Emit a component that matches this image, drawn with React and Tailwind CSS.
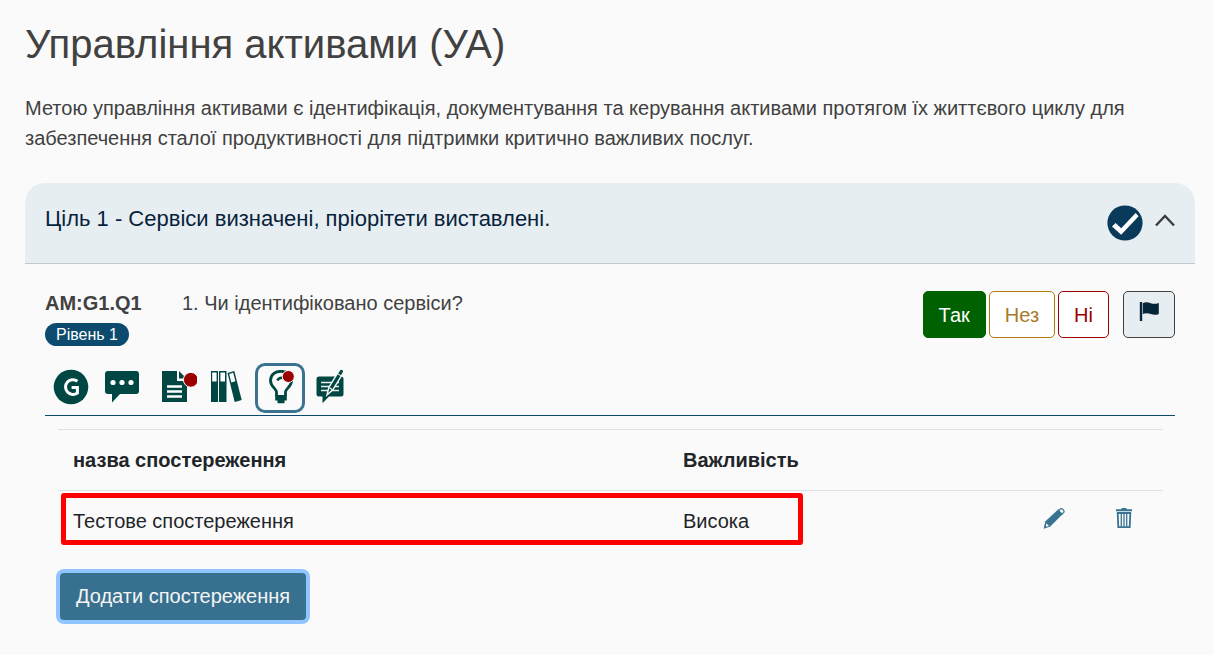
import React from "react";

const GlossaryIcon = () => (
  <svg viewBox="0 0 36 36" className="size-9" aria-hidden="true">
    <circle cx="18" cy="18" r="17.3" fill="#004643" />
    <path d="M24.400 12.200 A7.400 7.400 0 1 0 24.400 24 V18.600 H18.600" fill="none" stroke="#fff" strokeWidth="3" />
  </svg>
);

const CommentIcon = () => (
  <svg viewBox="0 0 36 36" className="size-9" aria-hidden="true">
    <path d="M4 2h28a3 3 0 0 1 3 3v17a3 3 0 0 1-3 3H16l-8 8.500V25H4a3 3 0 0 1-3-3V5a3 3 0 0 1 3-3z" fill="#004643" />
    <circle cx="9" cy="13.500" r="2.600" fill="#fff" />
    <circle cx="18" cy="13.500" r="2.600" fill="#fff" />
    <circle cx="27" cy="13.500" r="2.600" fill="#fff" />
  </svg>
);

const DocumentIcon = () => (
  <svg viewBox="0 0 36 36" className="size-9" aria-hidden="true">
    <path d="M1 2h15v10h10v21H1z" fill="#004643" />
    <path d="M18 2l7.500 7.500H18z" fill="#004643" />
    <path d="M6 17.500h15M6 22.500h15M6 27.500h15" stroke="#fff" strokeWidth="2.400" />
    <circle cx="29.800" cy="10.800" r="7.400" fill="#990000" stroke="#fafafa" />
  </svg>
);

const BooksIcon = () => (
  <svg viewBox="0 0 36 36" className="size-9" aria-hidden="true">
    <path d="M1 2h7v31H1zM9 2h7.500v31H9z" fill="#004643" />
    <path d="M2.200 3.600h4.400v9H2.200zM10.400 3.600h4.600v9h-4.600z" fill="#fff" />
    <path d="M17.500 4l6.800-2 7.400 29-7 2z" fill="#004643" />
    <path d="M19.200 5l4-1.200 2.200 8.400-4.100 1.200z" fill="#fff" />
  </svg>
);

const BulbIcon = () => (
  <svg viewBox="0 0 36 36" className="size-9" aria-hidden="true">
    <path
      d="M14.500 26v-4c0-3.500-6-5-6-11.500C8.500 4.500 13.500 1.300 19 1.300S29.500 4.500 29.500 10.500c0 6.500-6 8-6 11.500v4"
      fill="none"
      stroke="#004643"
      strokeWidth="2.800"
    />
    <path d="M15.400 10.500c.8-2.200 2.400-3 5.200-2.800" fill="none" stroke="#004643" strokeWidth="2.500" />
    <path d="M13.200 25h11.600v5.500h-2.300v2.800h-7v-2.800h-2.300z" fill="#004643" />
    <circle cx="26.300" cy="6.500" r="6" fill="#990000" stroke="#fafafa" />
  </svg>
);

const FeedbackIcon = () => (
  <svg viewBox="0 0 36 36" className="size-9" aria-hidden="true">
    <path d="M7 8.500h22a2.500 2.500 0 0 1 2.500 2.500v15a2.500 2.500 0 0 1-2.500 2.500H17l-6.500 6.800v-6.800H7A2.500 2.500 0 0 1 4.500 26V11A2.500 2.500 0 0 1 7 8.500z" fill="#004643" />
    <path d="M9 14.500h18M9 18.500h18M9 22.500h18" stroke="#e6eeee" strokeWidth="1.400" />
    <path d="M15 27l1.800-7.500L27.300 2.500q1.500-2.300 3.400-1t.5 3.400L21 21.500z" fill="#004643" stroke="#fafafa" strokeWidth="1.400" />
    <path d="M25.500 5.600l4 2.500M17.600 19.800l2.800 1.900" stroke="#fafafa" strokeWidth="1.100" />
  </svg>
);

const tools = [
  { label: "Глосарій", Icon: GlossaryIcon, place: "ml-2" },
  { label: "Коментар", Icon: CommentIcon, place: "ml-[15px]" },
  { label: "Документи", Icon: DocumentIcon, place: "ml-[21px]" },
  { label: "Посилання", Icon: BooksIcon, place: "ml-[13px]" },
];

const answer = "h-[47px] rounded-[5px] border px-[15px]";

export default function App() {
  return (
    <main className="min-h-screen bg-[#fafafa] pt-4 pr-[19px] pb-8 pl-[25px] font-['Liberation_Sans',Arial,sans-serif] text-xl leading-[30px] text-[#414141]">
      <h1 className="text-[40px] leading-[56px]">Управління активами (УА)</h1>
      <p className="mt-[21px]">
        Метою управління активами є ідентифікація, документування та керування активами протягом їх життєвого циклу для
        забезпечення сталої продуктивності для підтримки критично важливих послуг.
      </p>

      <section className="mt-[30px]">
        <header className="flex h-[81px] items-center justify-between rounded-t-[20px] border-b border-[#c2c8cb] bg-[#e7eef2] px-5 text-[#07233b]">
          <h2 className="pb-2 text-[22px]">Ціль 1 - Сервіси визначені, пріорітети виставлені.</h2>
          <button type="button" aria-label="Згорнути ціль" className="flex items-center gap-3">
            <svg viewBox="0 0 36 36" className="size-9" aria-hidden="true">
              <circle cx="18" cy="18" r="17.600" fill="#0a3a5a" />
              <path d="M5 21.500l3.600-3.600 5.600 5.400L28.600 8l3 3.200L14.200 29.800z" fill="#fff" />
            </svg>
            <svg viewBox="0 0 20 20" className="size-5" aria-hidden="true">
              <path d="M1 12.500L10 3l9 9.500" fill="none" stroke="#3d3d3d" strokeWidth="2.400" />
            </svg>
          </button>
        </header>

        <div className="px-5 pt-6">
          <div className="flex items-start">
            <div className="w-[137px]">
              <div className="font-bold">AM:G1.Q1</div>
              <span className="mt-[5px] block h-[23px] w-fit rounded-full bg-[#0c4b6e] px-[11px] text-base leading-[23px] text-white">
                Рівень 1
              </span>
            </div>
            <p className="flex-1">1. Чи ідентифіковано сервіси?</p>
            <div className="flex gap-[3px] pt-[3px]">
              <button type="button" className={`${answer} border-[#006100] bg-[#006100] text-white`}>
                Так
              </button>
              <button type="button" className={`${answer} border-[#b07a0c] bg-white text-[#a87a28]`}>
                Нез
              </button>
              <button type="button" className={`${answer} border-[#990000] bg-white text-[#990000]`}>
                Ні
              </button>
              <button
                type="button"
                aria-label="Позначити"
                className="ml-[11px] flex h-[47px] w-[52px] items-start justify-center rounded-[5px] border border-[#414141] bg-[#e7eef2] pt-[9px]"
              >
                <svg viewBox="0 0 20 20" className="size-5" aria-hidden="true">
                  <path d="M.8 1h2.400v19H.8z" fill="#062539" />
                  <path d="M3.800 2.200c3-1.500 5.500-.8 8 .1 2.500.8 5 .8 8-.4v11c-3 1.200-5.500 1-8 .2s-5-1.300-8 0z" fill="#062539" />
                </svg>
              </button>
            </div>
          </div>

          <div className="mt-[17px] flex h-[53px] items-start border-b border-[#0c4b6e]">
            {tools.map(({ label, Icon, place }) => (
              <button key={label} type="button" aria-label={label} className={`mt-[6px] ${place}`}>
                <Icon />
              </button>
            ))}
            <button
              type="button"
              aria-label="Спостереження"
              className="ml-[9px] flex size-[50px] items-center justify-center rounded-[10px] border-3 border-[#3a7290]"
            >
              <BulbIcon />
            </button>
            <button type="button" aria-label="Відгук" className="mt-[5px] ml-[7px]">
              <FeedbackIcon />
            </button>
          </div>

          <div className="pt-[13px] pr-3 pl-[13px]">
            <div className="relative">
              <table className="w-full table-fixed border-collapse text-left text-[#212529]">
                <colgroup>
                  <col className="w-[610px]" />
                  <col />
                  <col className="w-[70px]" />
                  <col className="w-[76px]" />
                </colgroup>
                <thead>
                  <tr className="h-[61px] border-y border-[#dee2e6]">
                    <th className="px-[15px]">назва спостереження</th>
                    <th className="px-[15px]">Важливість</th>
                    <th aria-label="Редагувати" />
                    <th aria-label="Видалити" />
                  </tr>
                </thead>
                <tbody>
                  <tr className="h-[60px]">
                    <td className="px-[15px]">Тестове спостереження</td>
                    <td className="px-[15px]">Висока</td>
                    <td>
                      <button type="button" aria-label="Редагувати" className="ml-[26px] flex pb-[6px]">
                        <svg viewBox="0 0 22 22" className="size-[22px]" aria-hidden="true">
                          <path d="M.8 21.400l1.400-6.800L15.400 2.200l4.600 4.600L7 19.800z" fill="#387391" />
                          <path d="M15.600 3.600l1.700-1.600c1.500-1.300 4.700 1.900 3.400 3.400l-1.700 1.700z" fill="#fafafa" stroke="#387391" strokeWidth="1.300" />
                          <path d="M3.200 16.200l2.800 2.800-3 .7z" fill="#fafafa" />
                          <path d="M.8 21.400l.7-3 2.300 2.300z" fill="#387391" />
                        </svg>
                      </button>
                    </td>
                    <td>
                      <button type="button" aria-label="Видалити" className="ml-[28px] flex pb-[6px]">
                        <svg viewBox="0 0 18 22" className="h-[22px] w-[18px]" aria-hidden="true">
                          <path d="M1 3.200h16M6.500 2h5" fill="none" stroke="#387391" strokeWidth="2" />
                          <path d="M2.700 6h12.600l-.6 14.200H3.300z" fill="none" stroke="#387391" strokeWidth="1.800" />
                          <path d="M6.300 6.500v13M9 6.500v13M11.700 6.500v13" stroke="#387391" strokeWidth="1.300" />
                        </svg>
                      </button>
                    </td>
                  </tr>
                </tbody>
              </table>
              <div className="pointer-events-none absolute top-[64px] left-[3px] h-[52px] w-[742px] rounded-[3px] border-5 border-[#ff0000]" />
            </div>
            <button
              type="button"
              className="mt-[22px] ml-[2px] h-[47px] rounded-[4px] bg-[#387190] px-4 text-[#f5f5f5] ring-4 ring-[#90c5ff]"
            >
              Додати спостереження
            </button>
          </div>
        </div>
      </section>
    </main>
  );
}
